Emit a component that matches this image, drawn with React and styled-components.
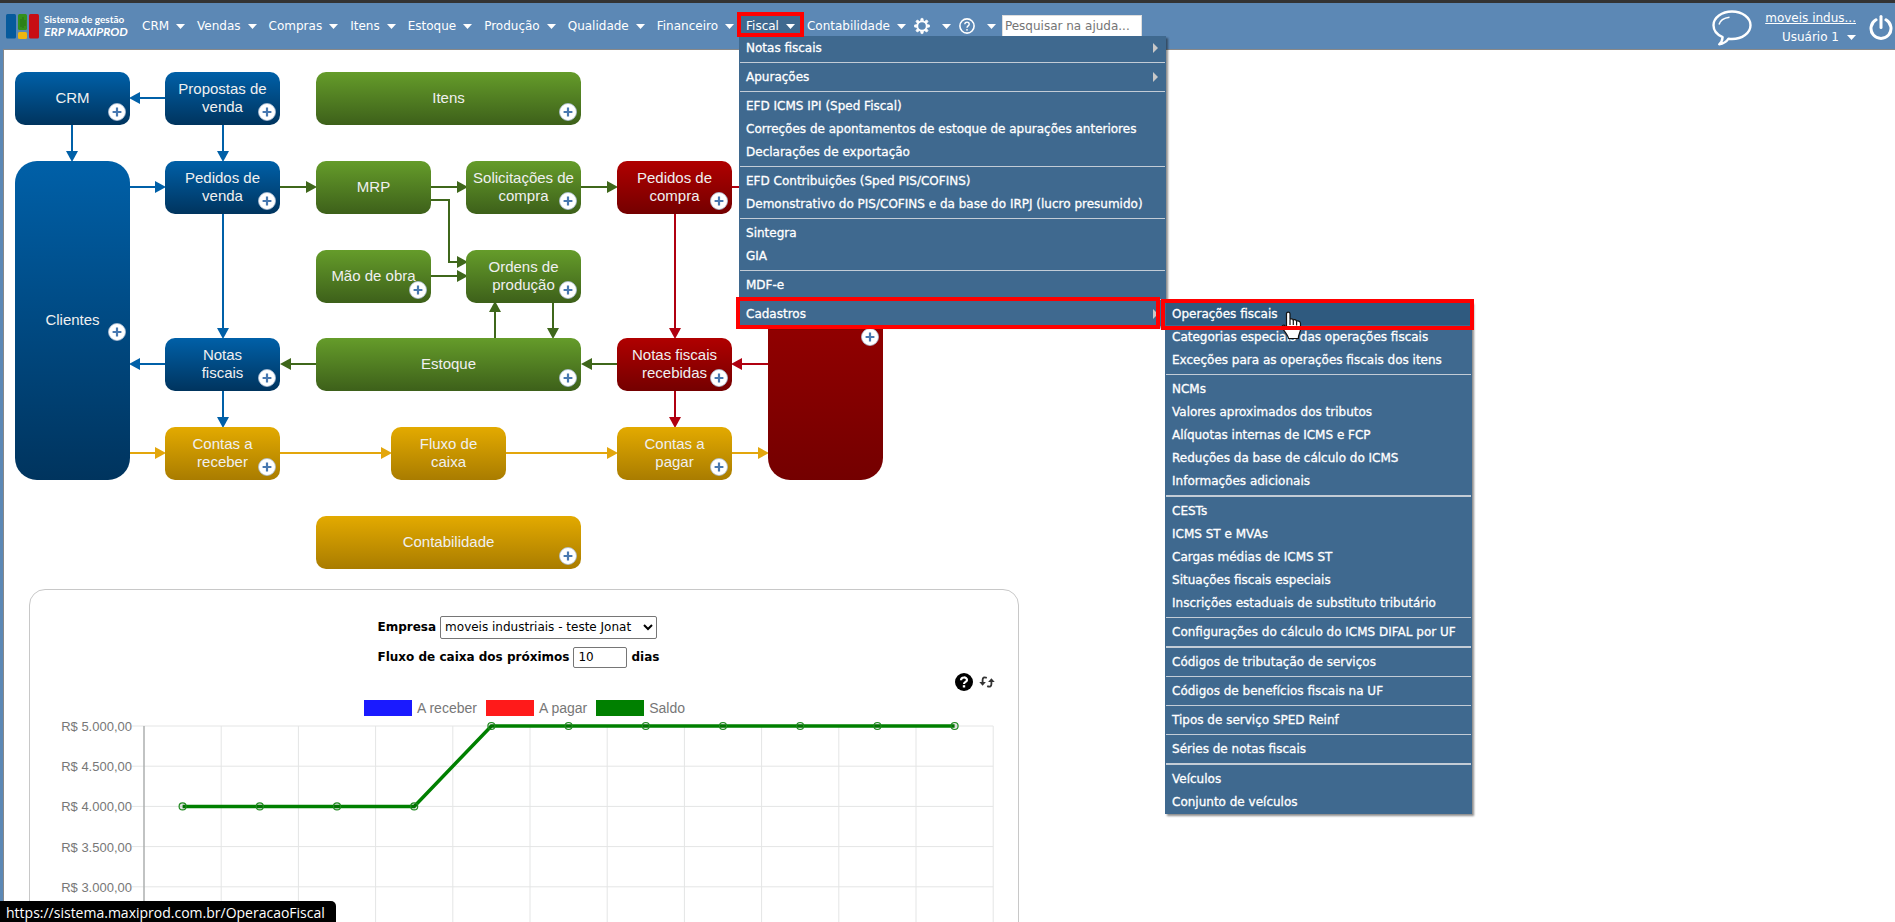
import { Fragment } from "react";
import styled, { createGlobalStyle } from "styled-components";

//data
const modules = ["CRM", "Vendas", "Compras", "Itens", "Estoque", "Produção", "Qualidade", "Financeiro"];

// every inner list is one block of the menu, blocks are split by a line
const fiscalMenu = [
    [{ label: "Notas fiscais", more: true }],
    [{ label: "Apurações", more: true }],
    [
        { label: "EFD ICMS IPI (Sped Fiscal)" },
        { label: "Correções de apontamentos de estoque de apurações anteriores" },
        { label: "Declarações de exportação" },
    ],
    [
        { label: "EFD Contribuições (Sped PIS/COFINS)" },
        { label: "Demonstrativo do PIS/COFINS e da base do IRPJ (lucro presumido)" },
    ],
    [{ label: "Sintegra" }, { label: "GIA" }],
    [{ label: "MDF-e" }],
];

const cadastrosMenu = [
    { items: ["Operações fiscais", "Categorias especiais das operações fiscais", "Exceções para as operações fiscais dos itens"] },
    {
        items: [
            "NCMs",
            "Valores aproximados dos tributos",
            "Alíquotas internas de ICMS e FCP",
            "Reduções da base de cálculo do ICMS",
            "Informações adicionais",
        ],
        thick: true,
    },
    {
        items: [
            "CESTs",
            "ICMS ST e MVAs",
            "Cargas médias de ICMS ST",
            "Situações fiscais especiais",
            "Inscrições estaduais de substituto tributário",
        ],
    },
    { items: ["Configurações do cálculo do ICMS DIFAL por UF"], thick: true },
    { items: ["Códigos de tributação de serviços"] },
    { items: ["Códigos de benefícios fiscais na UF"] },
    { items: ["Tipos de serviço SPED Reinf"] },
    { items: ["Séries de notas fiscais"], thick: true },
    { items: ["Veículos", "Conjunto de veículos"] },
];

const tones = {
    blue: ["#0060a8", "#00345e"],
    green: ["#659c2a", "#3d601a"],
    red: ["#b00000", "#740000"],
    yellow: ["#e3aa00", "#a97c00"],
};

const lineColors = { blue: "#0060a8", green: "#3f671b", red: "#b00010", yellow: "#e3a60c" };

const nodes = [
    { id: "crm", label: "CRM", tone: "blue", x: 11, y: 22 },
    { id: "propostas", label: "Propostas de venda", tone: "blue", x: 161, y: 22 },
    { id: "itens", label: "Itens", tone: "green", x: 312, y: 22, w: 265 },
    { id: "clientes", label: "Clientes", tone: "blue", x: 11, y: 111, h: 319, plusTop: 162 },
    { id: "pedidos-venda", label: "Pedidos de venda", tone: "blue", x: 161, y: 111 },
    { id: "mrp", label: "MRP", tone: "green", x: 312, y: 111, plain: true },
    { id: "solicitacoes", label: "Solicitações de compra", tone: "green", x: 462, y: 111 },
    { id: "pedidos-compra", label: "Pedidos de compra", tone: "red", x: 613, y: 111 },
    { id: "fornecedores", tone: "red", x: 764, y: 111, h: 319, plusTop: 167 },
    { id: "mao", label: "Mão de obra", tone: "green", x: 312, y: 200 },
    { id: "ordens", label: "Ordens de produção", tone: "green", x: 462, y: 200 },
    { id: "notas", label: "Notas fiscais", tone: "blue", x: 161, y: 288, narrow: true },
    { id: "estoque", label: "Estoque", tone: "green", x: 312, y: 288, w: 265 },
    { id: "recebidas", label: "Notas fiscais recebidas", tone: "red", x: 613, y: 288 },
    { id: "receber", label: "Contas a receber", tone: "yellow", x: 161, y: 377 },
    { id: "fluxo", label: "Fluxo de caixa", tone: "yellow", x: 387, y: 377, plain: true, narrow: true },
    { id: "pagar", label: "Contas a pagar", tone: "yellow", x: 613, y: 377, narrow: true },
    { id: "contabilidade", label: "Contabilidade", tone: "yellow", x: 312, y: 466, w: 265 },
];

const arrows = [
    ["blue", "M161 48H134"],
    ["blue", "M68 75V103"],
    ["blue", "M219 75V103"],
    ["blue", "M125 137H153"],
    ["green", "M276 137H304"],
    ["green", "M427 137H455"],
    ["green", "M577 137H605"],
    ["red", "M728 137H756"],
    ["green", "M427 150H445V212H455"],
    ["green", "M427 226H455"],
    ["blue", "M219 164V280"],
    ["red", "M671 164V280"],
    ["green", "M491 288V260"],
    ["green", "M549 252V280"],
    ["blue", "M161 314H134"],
    ["green", "M312 314H285"],
    ["green", "M613 314H586"],
    ["red", "M764 314H736"],
    ["blue", "M219 341V369"],
    ["red", "M671 341V369"],
    ["yellow", "M125 403H153"],
    ["yellow", "M276 403H379"],
    ["yellow", "M502 403H605"],
    ["yellow", "M728 403H756"],
];

const saldo = [4000, 4000, 4000, 4000, 5000, 5000, 5000, 5000, 5000, 5000, 5000];
const ticks = ["5.000,00", "4.500,00", "4.000,00", "3.500,00", "3.000,00"];

//icons
const Caret = () => (
    <CaretIcon viewBox="0 0 9 5" aria-hidden="true">
        <path d="M0 0H9L4.5 5Z" fill="currentColor" />
    </CaretIcon>
);

const GearIcon = () => (
    <svg width="16" height="18" viewBox="0 0 24 24" fill="none" stroke="#fff" aria-hidden="true">
        <circle cx="12" cy="12" r="7" strokeWidth="2.6" />
        {[0, 45, 90, 135, 180, 225, 270, 315].map((a) => (
            <path key={a} d="M9.8 4.2L10.6 0.6H13.4L14.2 4.2Z" fill="#fff" strokeWidth="1" transform={`rotate(${a} 12 12)`} />
        ))}
    </svg>
);

const HelpIcon = () => (
    <svg width="16" height="16" viewBox="0 0 16 16" fill="none" stroke="#fff" aria-hidden="true">
        <circle cx="8" cy="8" r="7.1" strokeWidth="1.6" />
        <path d="M5.8 6.3C5.8 3.4 10.3 3.4 10.2 6.2C10.1 8 8 7.8 8 9.8" strokeWidth="1.4" />
        <circle cx="8" cy="11.8" r="0.9" fill="#fff" stroke="none" />
    </svg>
);

const Plus = () => (
    <svg width="18" height="18" viewBox="0 0 18 18" aria-hidden="true">
        <circle cx="9" cy="9" r="8.5" fill="#fff" stroke="#a9bdd4" strokeWidth="0.8" />
        <path d="M9 4.6V13.4M4.6 9H13.4" stroke="#4878b0" strokeWidth="2.2" />
    </svg>
);

function TopItem({ label }) {
    return (
        <NavItem>
            <NavButton type="button">
                {label}
                <Caret />
            </NavButton>
        </NavItem>
    );
}

function TopBar() {
    return (
        <Header>
            <Logo href="#">
                <svg width="34" height="25" viewBox="0 0 34 25" aria-hidden="true">
                    <rect x="0" y="0" width="10" height="24.5" rx="1.5" fill="#065a9c" />
                    <rect x="12" y="0" width="9" height="16" rx="1.5" fill="#34901c" />
                    <path d="M15 5V13M17 3V14M19 6V12" stroke="#236b12" strokeWidth="0.8" />
                    <rect x="12" y="18" width="9" height="7" rx="1.5" fill="#eeb711" />
                    <rect x="23" y="0" width="10" height="24.5" rx="1.5" fill="#c80d14" />
                </svg>
                <LogoText>
                    <b>Sistema de gestão</b>
                    <em>ERP MAXIPROD</em>
                </LogoText>
            </Logo>
            <Nav>
                {modules.map((m) => (
                    <TopItem key={m} label={m} />
                ))}
                <NavItem>
                    <NavButton type="button" $open>
                        Fiscal
                        <Caret />
                    </NavButton>
                    <FiscalMenu />
                </NavItem>
                <TopItem label="Contabilidade" />
                <IconButton type="button" aria-label="Configurações">
                    <GearIcon />
                    <Caret />
                </IconButton>
                <IconButton type="button" aria-label="Ajuda">
                    <HelpIcon />
                    <Caret />
                </IconButton>
                <Search type="text" placeholder="Pesquisar na ajuda..." aria-label="Pesquisar na ajuda" />
            </Nav>
            <Account>
                <RoundButton type="button" aria-label="Chat">
                    <svg width="40" height="36" viewBox="0 0 40 36" fill="none" stroke="#fff" strokeLinejoin="round" aria-hidden="true">
                        <path
                            d="M20 1.5C9.8 1.5 1.5 7.6 1.5 15.2C1.5 20.3 5.2 24.7 10.6 27.1C10.4 30.2 9.2 32.6 7.2 34.3C11.3 33.7 14.6 31.6 16.5 28.7C17.6 28.9 18.8 29 20 29C30.2 29 38.5 22.8 38.5 15.2C38.5 7.6 30.2 1.5 20 1.5Z"
                            strokeWidth="2.4"
                        />
                        <path d="M7 14.5C8 10.5 12.5 7.8 17.5 7.2" strokeWidth="1.5" />
                    </svg>
                </RoundButton>
                <AccountText>
                    <a href="#">moveis indus...</a>
                    <UserButton type="button">
                        Usuário 1
                        <Caret />
                    </UserButton>
                </AccountText>
                <RoundButton type="button" aria-label="Sair">
                    <svg width="24" height="26" viewBox="0 0 24 26" fill="none" stroke="#fff" strokeWidth="3" strokeLinecap="round" aria-hidden="true">
                        <path d="M12 1.6V12.5" />
                        <path d="M7 4.8A10 10 0 1 0 17 4.8" />
                    </svg>
                </RoundButton>
            </Account>
        </Header>
    );
}

function FiscalMenu() {
    return (
        <Dropdown>
            {fiscalMenu.map((block, i) => (
                <Fragment key={i}>
                    {block.map((item) => (
                        <Entry key={item.label}>
                            <a href="#">{item.label}</a>
                            {item.more && <MoreArrow />}
                        </Entry>
                    ))}
                    <Line />
                </Fragment>
            ))}
            <Entry>
                <a href="#">Cadastros</a>
                <MoreArrow />
                <Submenu>
                    {cadastrosMenu.map((block, i) => (
                        <Fragment key={i}>
                            {block.items.map((label, n) => (
                                <Entry key={label} $active={i === 0 && n === 0}>
                                    <a href="#">{label}</a>
                                </Entry>
                            ))}
                            {i < cadastrosMenu.length - 1 && <Line $thick={block.thick} />}
                        </Fragment>
                    ))}
                </Submenu>
                <CadastrosMark />
                <Hand viewBox="0 0 21 29" aria-hidden="true">
                    <path
                        d="M5.5 15V2.8C5.5 0.5 9 0.5 9 2.8V8.5C9.5 7.5 12 7.6 12.3 9C13 8.2 15.3 8.5 15.5 10.2C16.5 9.5 19.5 10 19.5 12.5V18.5C19.5 21 17.5 23 17.3 27.5H7.6C7 24.5 3.5 20.5 1.3 17.2C0 14.8 2.8 13.2 4.2 15L5.5 17Z"
                        fill="#fff"
                        stroke="#111"
                        strokeWidth="1.2"
                    />
                    <path d="M9 8.5V14M12.3 9V14M15.6 10.2V14.5" stroke="#111" strokeWidth="1.2" />
                </Hand>
                <OperacoesMark />
            </Entry>
        </Dropdown>
    );
}

function ProcessMap() {
    return (
        <Canvas>
            <Wires viewBox="0 0 900 540" aria-hidden="true">
                <defs>
                    {Object.entries(lineColors).map(([tone, color]) => (
                        <marker
                            key={tone}
                            id={`head-${tone}`}
                            viewBox="0 0 11 12"
                            refX="2"
                            refY="6"
                            markerWidth="11"
                            markerHeight="12"
                            markerUnits="userSpaceOnUse"
                            orient="auto"
                        >
                            <path d="M0 0L11 6L0 12Z" fill={color} />
                        </marker>
                    ))}
                </defs>
                {arrows.map(([tone, d]) => (
                    <path key={d} d={d} fill="none" stroke={lineColors[tone]} strokeWidth="2" markerEnd={`url(#head-${tone})`} />
                ))}
            </Wires>
            {nodes.map((n) => (
                <MapNode key={n.id} type="button" aria-label={n.label || n.id} $x={n.x} $y={n.y} $w={n.w} $h={n.h} $tone={n.tone}>
                    {n.label && <NodeLabel $narrow={n.narrow}>{n.label}</NodeLabel>}
                    {!n.plain && (
                        <NodePlus $top={n.plusTop}>
                            <Plus />
                        </NodePlus>
                    )}
                </MapNode>
            ))}
        </Canvas>
    );
}

function CashChart() {
    const left = 90;
    const step = 77.2;
    const y = (value) => 6 + ((5000 - value) / 500) * 40.2;
    const points = saldo.map((v, i) => [left + step / 2 + i * step, y(v)]);

    return (
        <Plot viewBox="0 0 940 330" role="img" aria-label="Saldo">
            {ticks.map((t, i) => (
                <g key={t}>
                    <path d={`M${left - 12} ${6 + i * 40.2}H${left + step * 11}`} stroke="#e4e5e5" strokeWidth="1" />
                    <text x={left - 12} y={11 + i * 40.2} textAnchor="end">
                        R$ {t}
                    </text>
                </g>
            ))}
            {Array.from({ length: 12 }, (_, i) => (
                <path key={i} d={`M${left + i * step} 6V330`} stroke={i ? "#e4e5e5" : "#adafaf"} strokeWidth={i ? 1 : 1.5} />
            ))}
            <polyline points={points.map((p) => p.join(",")).join(" ")} fill="none" stroke="#008000" strokeWidth="3.5" />
            {points.map(([cx, cy]) => (
                <circle key={cx} cx={cx} cy={cy} r="3.5" fill="rgba(0,0,0,0.1)" stroke="#1f8a1f" strokeWidth="1.2" />
            ))}
        </Plot>
    );
}

function CashFlow() {
    return (
        <Card>
            <Filters>
                <FilterRow>
                    <label htmlFor="empresa">Empresa</label>
                    <CompanySelect id="empresa">
                        <option>moveis industriais - teste Jonat</option>
                    </CompanySelect>
                </FilterRow>
                <FilterRow>
                    <label htmlFor="dias">Fluxo de caixa dos próximos</label>
                    <DaysInput id="dias" type="text" defaultValue="10" />
                    <span>dias</span>
                </FilterRow>
            </Filters>
            <Tools>
                <RoundButton type="button" aria-label="Ajuda do gráfico">
                    <svg width="18" height="18" viewBox="0 0 18 18" fill="none" aria-hidden="true">
                        <circle cx="9" cy="9" r="9" fill="#000" />
                        <path d="M6 7.2C6 3.6 12 3.6 12 7C12 9 9 8.8 9 11" stroke="#fff" strokeWidth="2.2" />
                        <rect x="7.8" y="12.2" width="2.4" height="2.3" fill="#fff" />
                    </svg>
                </RoundButton>
                <RoundButton type="button" aria-label="Atualizar">
                    <svg width="16" height="12" viewBox="0 0 16 12" fill="none" stroke="#333" strokeWidth="1.8" aria-hidden="true">
                        <path d="M7.8 1.8C5 0.6 3.6 1.8 3.6 4V7" />
                        <path d="M0.3 6H6.9L3.6 9.8Z" fill="#333" stroke="none" />
                        <path d="M8.2 10.2C11 11.4 12.4 10.2 12.4 8V5" />
                        <path d="M9.1 6H15.7L12.4 2.2Z" fill="#333" stroke="none" />
                    </svg>
                </RoundButton>
            </Tools>
            <Legend>
                <LegendItem $color="#1a1aff">A receber</LegendItem>
                <LegendItem $color="#ff1a1a">A pagar</LegendItem>
                <LegendItem $color="#008000">Saldo</LegendItem>
            </Legend>
            <CashChart />
        </Card>
    );
}

function App() {
    return (
        <Page>
            <GlobalStyle />
            <TopBar />
            <Main>
                <ProcessMap />
                <CashFlow />
            </Main>
            <StatusBubble>https://sistema.maxiprod.com.br/OperacaoFiscal</StatusBubble>
        </Page>
    );
}

//styles
const GlobalStyle = createGlobalStyle`
*{
    box-sizing: border-box;
}
body{
    margin: 0;
    font-family: Verdana, "DejaVu Sans", sans-serif;
    font-size: 12px;
    color: #000;
}
button, input, select{
    font: inherit;
    margin: 0;
}
button{
    padding: 0;
    border: 0;
    background: none;
    color: inherit;
}
a{
    color: inherit;
    text-decoration: none;
}
`;

const Page = styled.div`
height: 100vh;
overflow: hidden;
display: flex;
flex-direction: column;
background: #5c88b5;
border-top: 3px solid #333;
`;

const Header = styled.header`
flex: none;
display: flex;
align-items: center;
height: 46px;
padding-left: 6px;
color: #fff;
`;

const Logo = styled.a`
display: flex;
align-items: center;
gap: 4px;
width: 130px;
`;

const LogoText = styled.span`
display: flex;
flex-direction: column;
font-family: Lato, sans-serif;
line-height: 14px;
white-space: nowrap;
b{
    font-size: 10px;
    line-height: 12px;
}
em{
    font-size: 12px;
    font-weight: bold;
}
`;

const Nav = styled.nav`
display: flex;
align-items: center;
`;

const NavItem = styled.div`
position: relative;
`;

const NavButton = styled.button`
display: flex;
align-items: center;
gap: 7px;
height: 20px;
padding: 0 6px;
white-space: nowrap;
background: ${(p) => (p.$open ? "#3f698f" : "none")};

&::after{
    content: ${(p) => (p.$open ? '""' : "none")};
    position: absolute;
    inset: -4px -3px -1px;
    border: 4px solid #f00;
    z-index: 3;
}
`;

const IconButton = styled.button`
display: flex;
align-items: center;
gap: 12px;
height: 20px;
padding: 0 6px 0 2px;
`;

const CaretIcon = styled.svg`
flex: none;
width: 9px;
height: 5px;
`;

const Search = styled.input`
width: 140px;
height: 22px;
padding: 0 2px;
border: 1px solid #ddd;
background: #fff;
&::placeholder{
    color: #757575;
}
`;

const Account = styled.div`
display: flex;
align-items: center;
gap: 13px;
margin-left: auto;
padding: 3px 2px 0 0;
`;

const RoundButton = styled.button`
display: flex;
`;

const AccountText = styled.div`
display: flex;
flex-direction: column;
align-items: flex-end;
line-height: 19px;
a{
    text-decoration: underline;
}
`;

const UserButton = styled.button`
display: flex;
align-items: center;
gap: 8px;
`;

const Dropdown = styled.ul`
position: absolute;
top: 100%;
left: -1px;
z-index: 2;
width: 427px;
margin: 0;
padding: 0 1px 1px;
list-style: none;
background: #3f698f;
box-shadow: 2px 2px 2px rgba(0, 0, 0, 0.45);
-webkit-text-stroke: 0.3px #fff;
`;

const Submenu = styled(Dropdown)`
top: 0;
left: 425px;
width: 307px;
`;

const Entry = styled.li`
position: relative;
display: flex;
align-items: center;
justify-content: space-between;
height: 23px;
padding: 0 7px 0 6px;
white-space: nowrap;
background: ${(p) => (p.$active ? "#2f5a7f" : "none")};
`;

const MoreArrow = styled.span`
border: 5px solid transparent;
border-left-color: #c8c8c8;
border-right: 0;
`;

const Line = styled.li`
height: ${(p) => (p.$thick ? 2 : 1)}px;
margin: 3px 0 2px;
background: #c3ccd6;
`;

// red frames lie over the menus
const CadastrosMark = styled.span`
position: absolute;
inset: -5px 5px -4px -4px;
border: 4px solid #f00;
z-index: 3;
`;

const OperacoesMark = styled.span`
position: absolute;
top: -3px;
left: 421px;
z-index: 5;
width: 313px;
height: 31px;
border: 4px solid #f00;
`;

const Hand = styled.svg`
position: absolute;
top: 9px;
left: 541px;
z-index: 4;
width: 21px;
height: 29px;
`;

const Main = styled.main`
flex: 1;
min-height: 0;
margin-left: 3px;
padding-bottom: 20px;
border-top: 1px solid #888;
border-left: 1px solid #888;
background: #fff;
`;

const Canvas = styled.section`
position: relative;
height: 539px;
`;

const Wires = styled.svg`
position: absolute;
top: 0;
left: 0;
width: 900px;
height: 540px;
`;

const MapNode = styled.button`
position: absolute;
left: ${(p) => p.$x}px;
top: ${(p) => p.$y}px;
width: ${(p) => p.$w || 115}px;
height: ${(p) => p.$h || 53}px;
display: flex;
align-items: center;
justify-content: center;
padding-bottom: 2px;
border-radius: ${(p) => (p.$h ? 22 : 10)}px;
background: linear-gradient(${(p) => tones[p.$tone].join(", ")});
color: #f0f0f0;
font-family: Arial, "Liberation Sans", sans-serif;
font-size: 15px;
line-height: 18px;
`;

const NodeLabel = styled.span`
width: ${(p) => (p.$narrow ? "80px" : "auto")};
padding: 0 6px;
`;

const NodePlus = styled.span`
position: absolute;
right: 4px;
top: ${(p) => p.$top || 31}px;
display: flex;
`;

const Card = styled.section`
max-width: 990px;
margin-left: 25px;
padding: 26px 23px 20px 24px;
border: 1px solid #c8c8c8;
border-radius: 16px;
`;

const Filters = styled.div`
display: flex;
flex-direction: column;
gap: 8px;
width: 294px;
margin: 0 auto;
`;

const FilterRow = styled.div`
display: flex;
align-items: center;
gap: 4px;
height: 22px;
white-space: nowrap;
label, span{
    font-weight: bold;
}
`;

const CompanySelect = styled.select`
height: 23px;
width: 217px;
border: 1px solid #767676;
border-radius: 2px;
background: #fff;
color: #000;
`;

const DaysInput = styled.input`
width: 54px;
height: 21px;
padding: 0 4px;
border: 1px solid #767676;
border-radius: 2px;
`;

const Tools = styled.div`
display: flex;
align-items: center;
justify-content: flex-end;
gap: 6px;
margin-top: 5px;
`;

const Legend = styled.div`
display: flex;
justify-content: center;
gap: 9px;
margin-top: 9px;
font-family: Arial, "Liberation Sans", sans-serif;
font-size: 14px;
line-height: 16px;
color: #777;
`;

const LegendItem = styled.span`
display: flex;
gap: 5px;
&::before{
    content: "";
    width: 48px;
    height: 16px;
    background: ${(p) => p.$color};
}
`;

const Plot = styled.svg`
display: block;
width: 940px;
height: 330px;
margin-top: 4px;
font-family: Arial, "Liberation Sans", sans-serif;
font-size: 13px;
text{
    fill: #777;
}
`;

const StatusBubble = styled.div`
position: fixed;
bottom: 0;
left: 0;
z-index: 10;
height: 21px;
padding: 0 11px 0 6px;
border-radius: 0 5px 0 0;
background: #000;
color: #fff;
font-family: "Segoe UI", "Open Sans", sans-serif;
font-size: 14px;
line-height: 24px;
`;

export default App;
